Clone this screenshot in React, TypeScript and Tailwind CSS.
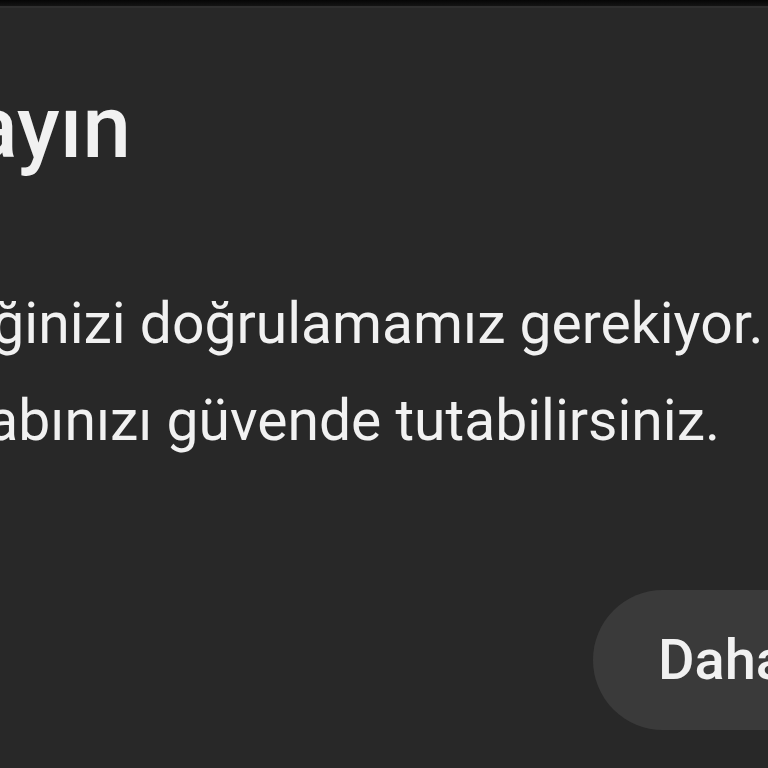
import React from 'react';

export default function App() {
  return (
    <div className="w-[768px] h-[768px] overflow-hidden bg-[#282828] text-[#f1f1f1] font-['Roboto',_'Liberation_Sans',_sans-serif]">
      {/* top edge of the dialog */}
      <div className="h-[6px] bg-gradient-to-b from-[#060606] to-[#141414]" />
      <div className="h-[2px] bg-[#2f2f2f]" />

      <div className="flex flex-col -ml-[113px] pt-[76px]">
        <h1 className="-ml-[173px] text-[87px] leading-none font-medium whitespace-nowrap">
          Doğrulayın
        </h1>

        <p className="mt-[104px] text-[57px] leading-[97px] whitespace-nowrap">
          <span className="block -ml-[22px]">Kimliğinizi doğrulamamız gerekiyor.</span>
          <span className="block">Hesabınızı güvende tutabilirsiniz.</span>
        </p>

        <div className="flex mt-[121px] pl-[706px]">
          <button className="h-[140px] rounded-full bg-[#3a3a3a] pl-[65px] pr-[65px] text-[56px] font-medium whitespace-nowrap">
            Daha fazla bilgi
          </button>
        </div>
      </div>
    </div>
  );
}
